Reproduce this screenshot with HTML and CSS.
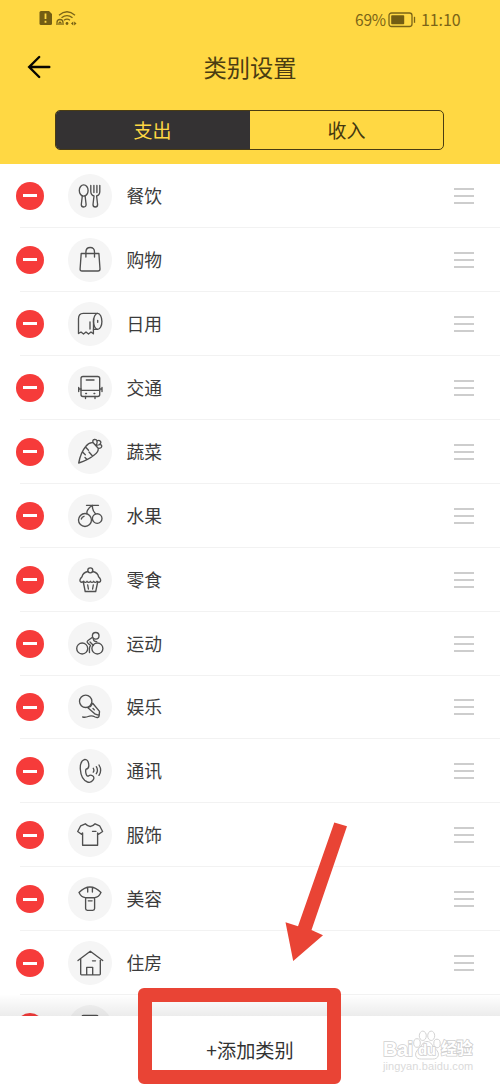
FILE: index.html
```html
<!DOCTYPE html>
<html lang="zh-CN">
<head>
<meta charset="utf-8">
<title>类别设置</title>
<link rel="stylesheet" href="styles.css">
</head>
<body>
<div class="screen">
  <header class="header">
    <div class="status">
      <svg class="status-left" viewBox="0 0 40 18" width="40" height="18">
        <path class="solid" d="M2 1h8l3 3v9.500q0 1.500-1.500 1.500h-9.500q-1.500 0-1.500-1.500v-11q0-1.500 1.500-1.500z"/>
        <path class="mark" d="M6.500 3.500v5.500M6.500 10.800v2"/>
        <path class="wave" d="M20 5.200q8-7 16 0M22.500 7.800q5.500-4.500 11 0M25 10.300q3-2.300 6 0M18 15v-2.500q0-3 3-3t3 3v2.500M20 15v-2q1-1.500 2 0v2"/>
        <circle class="solid" cx="28" cy="13.500" r="1.400"/>
        <path class="solid" d="M32 13.500l2.300-2v4zM37.500 13.500l-2.300-2v4z"/>
      </svg>
      <div class="status-right">
        <span class="percent">69%</span>
        <svg class="battery" viewBox="0 0 28 16" width="28" height="16">
          <rect class="shell" x="1" y="1" width="23" height="13.500" rx="2.500"/>
          <rect class="solid" x="3.200" y="3.300" width="13" height="9" rx=".8"/>
          <path class="shell" d="M26.500 4.800v6"/>
        </svg>
        <span class="clock">11:10</span>
      </div>
    </div>
    <div class="titlebar">
      <svg class="back" viewBox="0 0 24 24" width="24" height="24"><path d="M22.300 12H2.500M12.200 2L2.200 12l10 10"/></svg>
      <h1 class="title">类别设置</h1>
    </div>
    <div class="tabs">
      <div class="tab tab-active">支出</div>
      <div class="tab">收入</div>
    </div>
  </header>

  <main class="list">
    <div class="row"><i class="remove"></i>
      <svg class="icon" viewBox="0 0 44 44"><ellipse cx="15.700" cy="16.500" rx="4.400" ry="5.600"/><path d="M14.300 22l-1 8.500q0 2.500 2.400 2.500t2.400-2.500l-1-8.500M22.800 11.500v6q0 3.500 3.200 4.500l-1 8.500q0 2.500 2.300 2.500t2.300-2.500l-1-8.500q3.200-1 3.200-4.500v-6M25.900 11.500v7M28.900 11.500v7"/></svg>
      <span class="name">餐饮</span><i class="handle"></i></div>
    <div class="row"><i class="remove"></i>
      <svg class="icon" viewBox="0 0 44 44"><path d="M13.200 15.500h17.700l1.100 15.500q0 2-2 2h-16q-2 0-1.900-2zM17.900 19v-5q0-4.500 4.300-4.500t4.300 4.500v5"/></svg>
      <span class="name">购物</span><i class="handle"></i></div>
    <div class="row"><i class="remove"></i>
      <svg class="icon" viewBox="0 0 44 44"><path d="M29.700 11.300h-14.500q-4.700 0-4.700 5.500v14.700l2.500-1.500 2.500 2 2.500-2 2.500 2 2.500-2 2.400 1.800v-5M22 20v7M25.500 17v10.300h4"/><ellipse cx="29.700" cy="19.400" rx="4.200" ry="8"/><path d="M29.700 18.500v1.700"/></svg>
      <span class="name">日用</span><i class="handle"></i></div>
    <div class="row"><i class="remove"></i>
      <svg class="icon" viewBox="0 0 44 44"><rect x="13" y="10.500" width="18.700" height="20" rx="2"/><path d="M13 24.300h18.700M18.300 14h7.700M10.700 21.500v4M34 21.500v4M11 23h2M32 23h2M17.500 30.500v2M27 30.500v2M17.700 27.500h.8M26 27.500h.8"/></svg>
      <span class="name">交通</span><i class="handle"></i></div>
    <div class="row"><i class="remove"></i>
      <svg class="icon" viewBox="0 0 44 44"><path d="M10.700 33q2-10.500 7-16.500 3.500-4.500 7.500-3.700l5 5.500q.5 3.500-4 6.700-6 5-15.500 8zM17.500 17l3 3.200M14.800 22.200l2.500 2.500M19 29.500l-2-2M24.500 26l-3.500-4M25.200 12.800q-1.200-3 1.200-3.300t2.500 1.700q2-1.700 3.400 0t-.8 3.300q2.500 0 2.200 2t-3.500 1.800M28.900 11.200q1 2-.9 3.800M31.500 14.500q-1.500 1-3.500.5"/></svg>
      <span class="name">蔬菜</span><i class="handle"></i></div>
    <div class="row"><i class="remove"></i>
      <svg class="icon" viewBox="0 0 44 44"><circle cx="17" cy="26" r="6.500"/><circle cx="29.200" cy="24.500" r="4.800"/><path d="M18.500 11.300h12M24.500 11.300q-5.500 3-5.700 8.200M24.500 11.300q-.5 5 3 8.500M13.300 25q.7-2.200 2.700-2.700"/></svg>
      <span class="name">水果</span><i class="handle"></i></div>
    <div class="row"><i class="remove"></i>
      <svg class="icon" viewBox="0 0 44 44"><circle cx="22.300" cy="12.300" r="2.500"/><path d="M19.800 13.500q-5 1-5.800 5.300-2.800 3-1.800 4.700 1.500 1.500 3.500-.2 1.600 2.200 3.300 0 1.600 2.200 3.300 0 1.600 2.200 3.300 0 1.600 2.200 3.300 0 2 1.700 3.500.2 1-1.700-1.800-4.700-.8-4.300-5.800-5.300M15.400 24.500l1.800 9h10.500l1.900-9M19.700 27l.7 4M25.300 27l-.7 4"/></svg>
      <span class="name">零食</span><i class="handle"></i></div>
    <div class="row"><i class="remove"></i>
      <svg class="icon" viewBox="0 0 44 44"><circle cx="14.200" cy="26.500" r="5.500"/><circle cx="29.400" cy="26.500" r="5.500"/><circle cx="27.700" cy="13.800" r="3.300"/><path d="M24.500 15.200l-4.500 3.300q-1.700 1.300 0 2.700l2.500 2.300q-1.500 1.500-1 7M25.400 16.400q-.4 3 3.300 3.300M22 20l3.500 3.500"/></svg>
      <span class="name">运动</span><i class="handle"></i></div>
    <div class="row"><i class="remove"></i>
      <svg class="icon" viewBox="0 0 44 44"><circle cx="17.700" cy="16.300" r="6.200"/><path d="M19.600 22.500l7.700 6.700 3.900 1.200.3-4-6.800-8.200M20.800 22.200q2.300-.7 3.200-3M25 23.500l1.300 1.400M31.200 30.400q-.3 3.200-4 1.600-3.700-2-7-.5-2.700 1.200-5.500.5"/></svg>
      <span class="name">娱乐</span><i class="handle"></i></div>
    <div class="row"><i class="remove"></i>
      <svg class="icon" viewBox="0 0 44 44"><path d="M17 10.300q-5 1.200-4.700 9.700.7 10.500 7.200 13 3.500 1.200 5.500-1.800 2-2.700-.5-4.400-2-1.400-4 .2-1.500.6-2.200-1.500-1.200-3.500-.2-5.300 3-.7 2.700-4.200-.4-5.500-3.800-5.700zM25.300 19.300q1.200 1.900 0 3.800M28.300 17.700q2.300 3.500 0 7M31 16q3.300 5.200 0 10.400"/></svg>
      <span class="name">通讯</span><i class="handle"></i></div>
    <div class="row"><i class="remove"></i>
      <svg class="icon" viewBox="0 0 44 44"><path d="M17.300 10.800q4.900 5.400 9.800 0l4.500 2 3 5.700-4 2.800-1-1.300v12.200h-15V20l-1.100 1.300-3.800-2.800 3-5.700zM24.500 18.300h3.500"/></svg>
      <span class="name">服饰</span><i class="handle"></i></div>
    <div class="row"><i class="remove"></i>
      <svg class="icon" viewBox="0 0 44 44"><path d="M11 15.500q11-11 22 0-2.200 4.700-6.400 5.200h-9.200q-4.200-.5-6.400-5.200zM17.600 20.700v10.800q0 1.800 1.800 1.800h5.400q1.800 0 1.800-1.800V20.700M20.300 23.800h3.800M19.700 11.500v3.500M24.400 11.500v3.500"/></svg>
      <span class="name">美容</span><i class="handle"></i></div>
    <div class="row"><i class="remove"></i>
      <svg class="icon" viewBox="0 0 44 44"><path d="M10 19.500l12.300-9.300 12.400 9.300M12.700 17.700V33q0 .8.8.8h18q.8 0 .8-.8V17.700M18.700 33.800v-7.500h6v7.500M24.500 19.800h3"/></svg>
      <span class="name">住房</span><i class="handle"></i></div>
    <div class="row"><i class="remove"></i>
      <svg class="icon" viewBox="0 0 44 44"><rect x="14" y="10.500" width="16" height="22" rx="1.500"/></svg>
    </div>
  </main>

  <footer class="footer">
    <span class="add">+添加类别</span>
  </footer>

  <svg class="arrow" viewBox="0 0 62 140" width="62" height="140"><path d="M49.300 1.500L62 5.300 26.500 109 38 114.200 8.200 140 .5 101.300l12.500 4z"/></svg>
  <div class="frame"></div>

  <div class="watermark">
    <div class="brand">
      <span class="wm-bai">Bai</span>
      <span class="wm-paw">
        <svg class="paw" viewBox="0 0 28 30" width="28" height="30"><ellipse cx="4" cy="13" rx="3.300" ry="4.300"/><ellipse cx="9.800" cy="5.800" rx="3.500" ry="4.700"/><ellipse cx="18.200" cy="5.800" rx="3.500" ry="4.700"/><ellipse cx="24" cy="13.500" rx="3.200" ry="4.300"/><path d="M14 11.500c4.500 0 5 4.500 8 7 6 5 3.500 11-2.500 10.500h-11C2.500 29.500 0 23.500 6 18.500c3-2.500 3.500-7 8-7z"/></svg>
        <span class="wm-du">du</span>
      </span>
      <span class="wm-cn">经验</span>
    </div>
    <div class="wm-url">jingyan.baidu.com</div>
  </div>
</div>
</body>
</html>
```
FILE: styles.css
```css
* { box-sizing: border-box; }
body {
  margin: 0;
  background: #fff;
  font-family: Roboto, "Noto Sans CJK SC", sans-serif;
}
.screen {
  position: relative;
  display: flex;
  flex-direction: column;
  width: 500px;
  height: 1084px;
  overflow: hidden;
  background: #fff;
}
.header {
  flex: none;
  height: 164px;
  background: #ffd843;
}
.status {
  display: flex;
  justify-content: space-between;
  height: 38px;
  padding: 10px 39px 0 39px;
  color: #7b6417;
}
.status-right {
  display: flex;
  align-items: center;
  height: 18px;
  font: 16px/18px "Noto Sans CJK SC", sans-serif;
}
.percent { width: 33px; font-size: 15.500px; letter-spacing: -.2px; }
.clock { width: 40px; margin-left: 5px; letter-spacing: -.1px; }
.battery { margin-top: 1px; }
.solid { fill: #735d13; }
.shell { fill: none; stroke: #7b6417; stroke-width: 1.3; }
.mark { stroke: #ffd843; stroke-width: 1.8; }
.wave { fill: none; stroke: #7b6417; stroke-width: 1.3; }
.titlebar {
  display: grid;
  grid-template-columns: 24px 1fr 24px;
  align-items: center;
  height: 58px;
  padding: 0 27px;
}
.back {
  fill: none;
  stroke: #080600;
  stroke-width: 2.4;
  stroke-linecap: round;
}
.title {
  margin: 3px 0 0;
  font-size: 23.300px;
  font-weight: 400;
  line-height: 32px;
  text-align: center;
  color: #4a3c12;
}
.tabs {
  display: flex;
  width: 389px;
  height: 40px;
  margin: 14px 0 0 55px;
  border: 1.300px solid #4a3c12;
  border-radius: 5px;
  overflow: hidden;
}
.tab {
  flex: 1;
  font-size: 19px;
  line-height: 41px;
  text-align: center;
  color: #43370f;
}
.tab-active { padding-right: 1px; background: #343233; color: #ffd843; }
.list { flex: none; height: 852px; overflow: hidden; }
.row {
  position: relative;
  display: flex;
  align-items: center;
  height: 63.950px;
  padding: 0 26px 0 16px;
}
.row::after {
  content: "";
  position: absolute;
  left: 20px;
  right: 0;
  bottom: 0;
  height: 1px;
  background: #f2f2f2;
}
.remove {
  display: flex;
  align-items: center;
  justify-content: center;
  width: 28px;
  height: 28px;
  border-radius: 50%;
  background: #f63b3a;
}
.remove::before {
  content: "";
  width: 14px;
  height: 3px;
  background: #fff;
}
.icon {
  width: 44px;
  height: 44px;
  margin-left: 24px;
  border-radius: 50%;
  background: #f5f5f5;
  fill: none;
  stroke: #505050;
  stroke-width: 1.350;
  stroke-linecap: round;
  stroke-linejoin: round;
}
.name {
  flex: 1;
  margin: 2px 0 0 14.500px;
  font-size: 17.800px;
  line-height: 26px;
  color: #3b3b3b;
}
.handle {
  width: 20px;
  height: 16px;
  border: solid #cdcdcd;
  border-width: 2px 0;
  background: linear-gradient(#cdcdcd, #cdcdcd) center / 100% 2px no-repeat;
}
.footer {
  position: relative;
  flex: 1;
  background: #fff;
  text-align: center;
}
.footer::before {
  content: "";
  position: absolute;
  left: 0;
  right: 0;
  bottom: 100%;
  height: 22px;
  background: linear-gradient(rgba(0,0,0,0), rgba(0,0,0,.075));
}
.add {
  display: block;
  padding-top: 20px;
  font: 19.200px/28px "Noto Sans CJK SC", sans-serif;
  color: #333;
}
.arrow { position: absolute; left: 284.500px; top: 820.500px; fill: #e94435; }
.frame {
  position: absolute;
  left: 138px;
  top: 988px;
  width: 203px;
  height: 96px;
  border-radius: 6px;
  border: 14px solid #e94435;
}
.watermark {
  position: absolute;
  left: 383px;
  top: 1029px;
  width: 91px;
  color: #fff;
}
.brand { display: flex; align-items: flex-end; height: 31px; white-space: nowrap; }
.wm-bai,
.wm-du,
.wm-cn { -webkit-text-stroke: 1.600px #cfcfcf; paint-order: stroke fill; }
.wm-bai { width: 30px; font: bold 20px/22px "Liberation Sans", sans-serif; letter-spacing: -.5px; }
.wm-paw { position: relative; width: 28px; height: 30px; }
.paw { display: block; fill: #fff; stroke: #d4d4d4; stroke-width: 1; }
.wm-du {
  position: absolute;
  left: 5px;
  bottom: 1px;
  font: bold 15px/18px "Liberation Sans", sans-serif;
  letter-spacing: -.3px;
}
.wm-cn { font-size: 16px; font-weight: 700; line-height: 22px; letter-spacing: -.5px; }
.wm-url {
  color: #dadada;
  font: 11px/13px "Liberation Sans", sans-serif;
  letter-spacing: .1px;
}
```
